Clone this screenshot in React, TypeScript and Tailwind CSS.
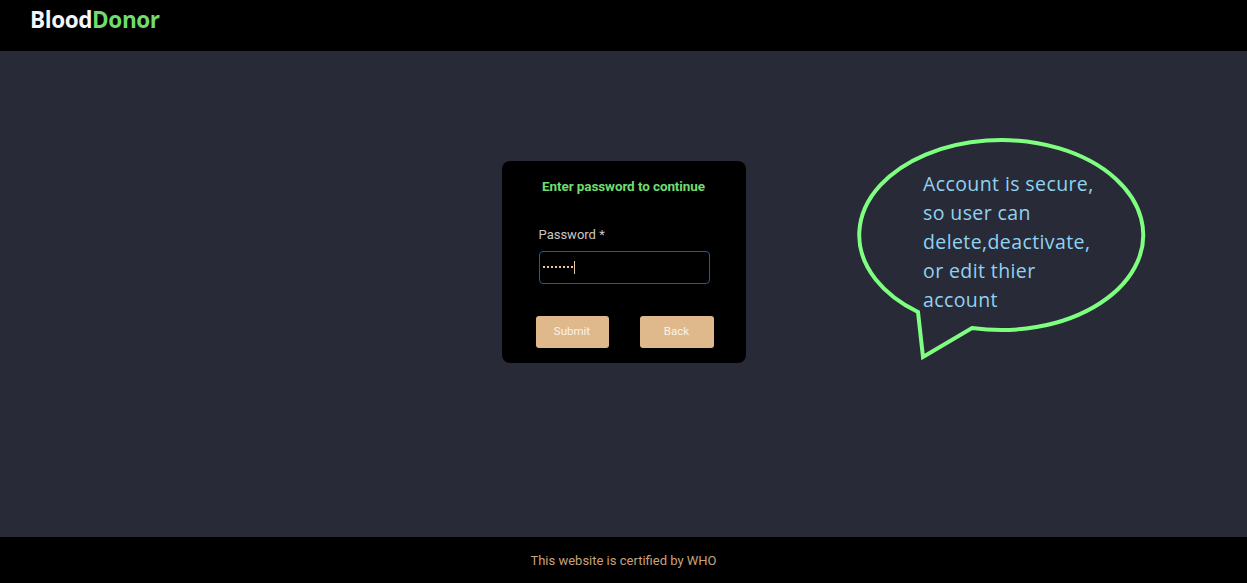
import React from "react";

export default function App() {
  const dots = [0, 1, 2, 3, 4, 5, 6, 7];
  return (
    <div className="flex h-[583px] w-[1247px] flex-col bg-[#292a38] font-['Roboto',sans-serif]">
      <header className="flex h-[51px] shrink-0 items-start bg-black pl-[30px] pt-[7px]">
        <div className="text-[22.5px] font-bold leading-[26px] tracking-[-0.4px] font-['Open_Sans',sans-serif]">
          <span className="text-[#f4f6fb]">Blood</span>
          <span className="text-[#6fdc6f]">Donor</span>
        </div>
      </header>

      <main className="relative flex flex-1 justify-center pt-[110px]">
        <div className="flex h-[202px] w-[244px] flex-col rounded-[8px] bg-black">
          <h2 className="mt-[15px] text-center text-[13.5px] font-bold text-[#6fdc6f] tracking-[-0.1px]">
            Enter password to continue
          </h2>
          <div className="mt-[29px] pl-[37px] text-[13px] text-[#c8c8c8]">Password *</div>
          <div className="ml-[37px] mt-[6px] flex h-[33px] w-[171px] items-center rounded-[4px] border border-[#1f5a9a] bg-black pl-[3px]">
            <div className="flex gap-[2px]">
              {dots.map((d) => (
                <span key={d} className="h-[2px] w-[2px] bg-[#e6c9a2]" />
              ))}
            </div>
            <span className="ml-[1px] h-[13px] w-[1px] bg-[#e6c9a2]" />
          </div>
          <div className="mt-[32px] flex gap-[31px] pl-[34px]">
            <button className="h-[32px] w-[73px] rounded-[3px] bg-[#dfb98b] text-[11.5px] text-[#fbf3e8] shadow-[0_1px_2px_rgba(0,0,0,0.5)]">
              Submit
            </button>
            <button className="h-[32px] w-[74px] rounded-[3px] bg-[#dfb98b] text-[11.5px] text-[#fbf3e8] shadow-[0_1px_2px_rgba(0,0,0,0.5)]">
              Back
            </button>
          </div>
        </div>

        <svg
          className="absolute left-[850px] top-[79px]"
          width="310"
          height="240"
          viewBox="850 130 310 240"
        >
          <path
            d="M 918 312 A 142 95 0 1 1 972 328 L 923 357 Z"
            fill="none"
            stroke="#7fff7f"
            strokeWidth="4"
            strokeLinejoin="miter"
          />
        </svg>
        <div className="absolute left-[923px] top-[118px] w-[230px] text-[19.5px] leading-[29px] tracking-[0.4px] text-[#8fd3f0] font-['Open_Sans',sans-serif]">
          Account is secure,
          <br />
          so user can
          <br />
          delete,deactivate,
          <br />
          or edit thier
          <br />
          account
        </div>
      </main>

      <footer className="flex h-[46px] shrink-0 items-center justify-center bg-black pt-[2px] text-[13px] text-[#c9a27a]">
        This website is certified by WHO
      </footer>
    </div>
  );
}
